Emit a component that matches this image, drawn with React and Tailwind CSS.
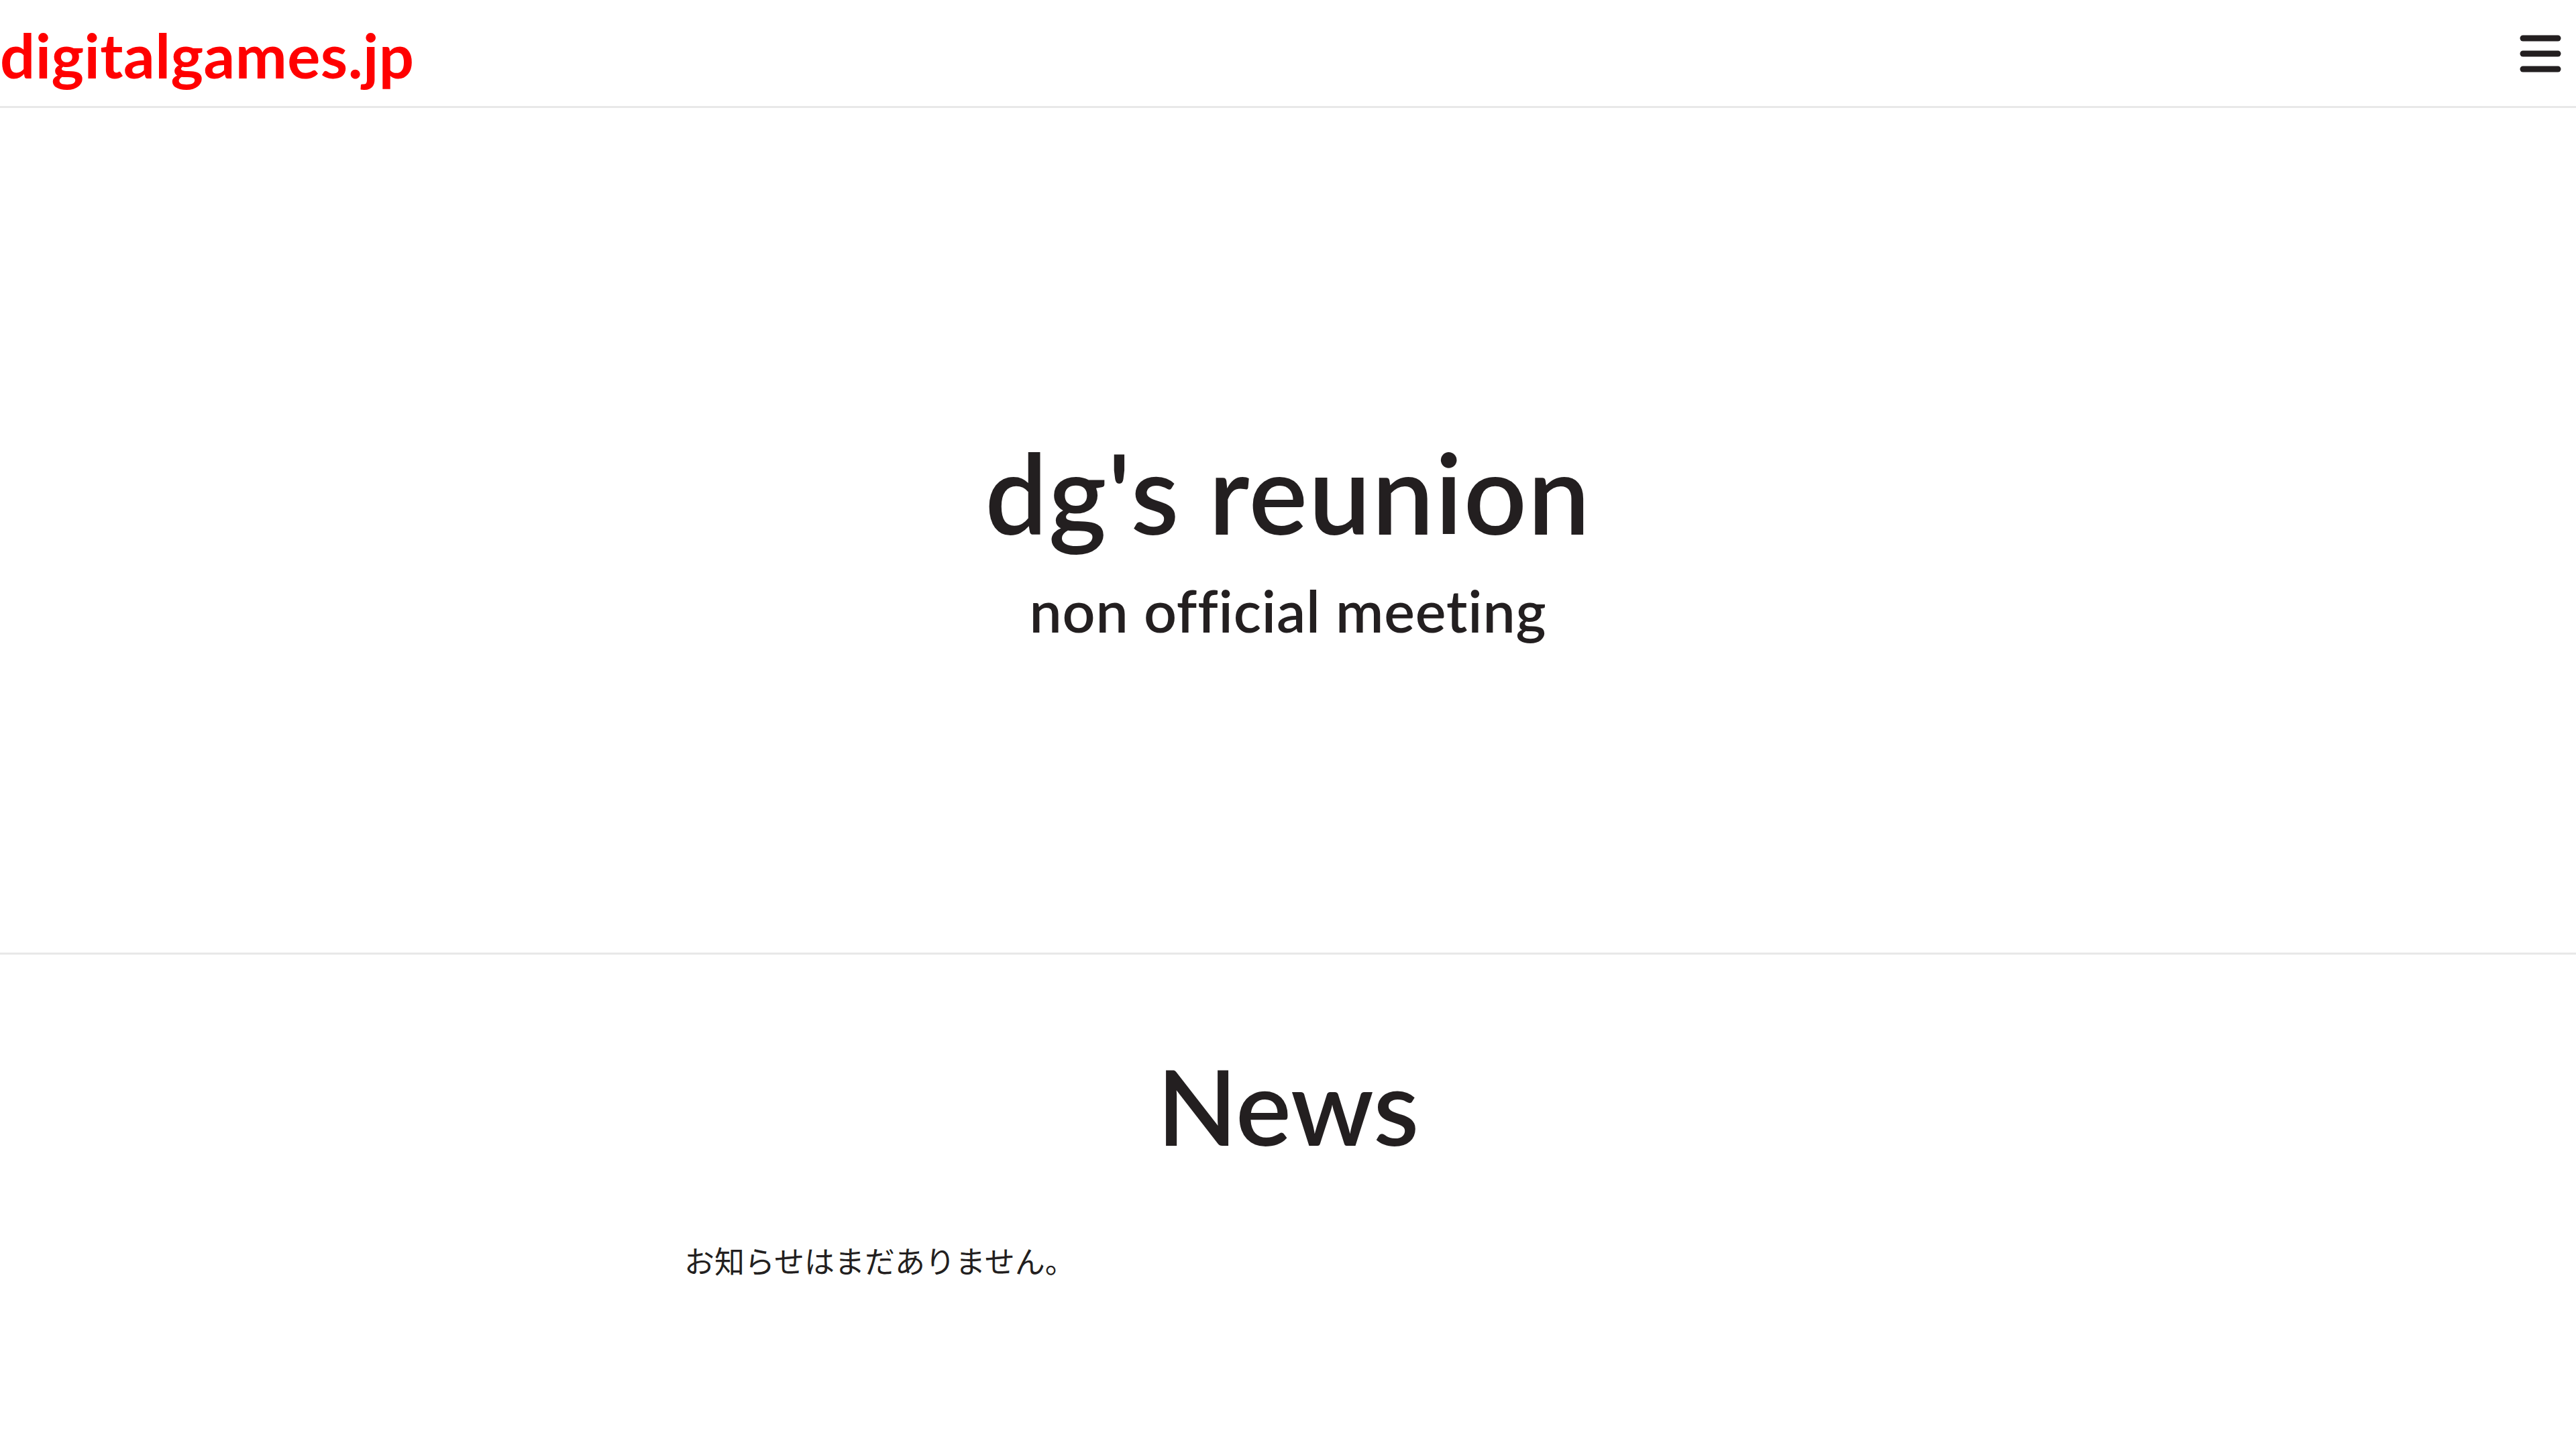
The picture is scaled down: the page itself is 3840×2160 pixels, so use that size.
import React from "react";

function MenuIcon() {
  return (
    <svg width="62" height="58" viewBox="0 0 62 58" aria-hidden="true">
      <g stroke="#231f20" strokeWidth="9" strokeLinecap="round">
        <line x1="5" y1="6" x2="57" y2="6" />
        <line x1="5" y1="29" x2="57" y2="29" />
        <line x1="5" y1="52" x2="57" y2="52" />
      </g>
    </svg>
  );
}

export default function App() {
  return (
    <div className="min-h-screen bg-white text-[#231f20] font-['Lato','Noto_Sans',sans-serif]">
      <header className="flex h-[161px] items-center justify-between border-b-[3px] border-[#e8e8e8] pr-[22px]">
        <a href="#" className="mt-[6px] text-[92px] font-bold leading-none tracking-[0.005em] text-[#ff0000]">
          digitalgames.jp
        </a>
        <button type="button" className="mt-[2px]">
          <MenuIcon />
        </button>
      </header>

      <section className="flex h-[1262px] flex-col items-center justify-center border-b-[3px] border-[#e8e8e8] pt-[22px]">
        <h1 className="text-[165px] font-semibold leading-none tracking-[0.01em]">dg's reunion</h1>
        <p className="mt-[51px] text-[86px] font-semibold leading-none tracking-[0.01em]">
          non official meeting
        </p>
      </section>

      <section className="mx-auto max-w-[1800px] pt-[147px] pb-[200px]">
        <h2 className="text-center text-[156px] font-semibold leading-none">News</h2>
        <p className="mt-[130px] text-[45px] leading-none font-['Noto_Sans_CJK_JP','Noto_Sans',sans-serif]">
          お知らせはまだありません。
        </p>
      </section>
    </div>
  );
}
